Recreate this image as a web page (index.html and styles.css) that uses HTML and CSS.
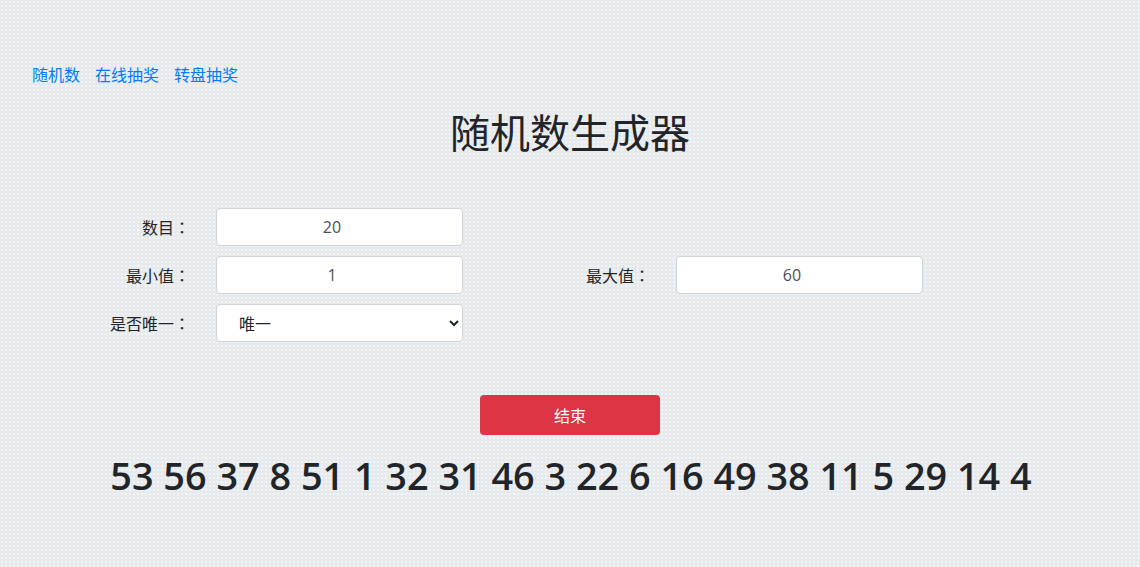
FILE: index.html
```html
<!DOCTYPE html>
<html lang="zh-CN">
<head>
<meta charset="utf-8">
<title>随机数生成器</title>
<link rel="stylesheet" href="styles.css">
</head>
<body>
<nav class="nav">
  <a href="#" class="nav-link">随机数</a>
  <a href="#" class="nav-link">在线抽奖</a>
  <a href="#" class="nav-link">转盘抽奖</a>
</nav>
<h1 class="title">随机数生成器</h1>
<form class="form">
  <div class="form-row">
    <label class="label">数目<span class="colon" lang="zh-Hant">：</span></label>
    <input class="field" type="number" value="20">
  </div>
  <div class="form-row">
    <label class="label">最小值<span class="colon" lang="zh-Hant">：</span></label>
    <input class="field" type="number" value="1">
    <label class="label label-second">最大值<span class="colon" lang="zh-Hant">：</span></label>
    <input class="field" type="number" value="60">
  </div>
  <div class="form-row">
    <label class="label">是否唯一<span class="colon" lang="zh-Hant">：</span></label>
    <select class="field select">
      <option>唯一</option>
      <option>不唯一</option>
    </select>
  </div>
</form>
<div class="actions">
  <button type="button" class="btn-stop">结束</button>
</div>
<div class="result">53 56 37 8 51 1 32 31 46 3 22 6 16 49 38 11 5 29 14 4</div>
</body>
</html>
```

FILE: styles.css
```css
html, body {
  margin: 0;
  padding: 0;
}
body {
  width: 1140px;
  height: 567px;
  overflow: hidden;
  background-color: #e7eaed;
  background-image: radial-gradient(circle, rgba(255,255,255,0.85) 0.55px, transparent 0.9px);
  background-size: 4px 4px;
  font-family: "Noto Sans CJK SC", "Noto Sans", sans-serif;
  color: #212529;
  font-size: 16px;
}
.nav {
  display: flex;
  gap: 15px;
  padding: 62px 0 0 32px;
  height: 24px;
  line-height: 24px;
}
.nav-link {
  color: #007bff;
  text-decoration: none;
  font-size: 16px;
}
.title {
  margin: 17px 0 0;
  text-align: center;
  font-size: 40px;
  font-weight: 400;
  line-height: 56px;
  height: 56px;
}
.form {
  margin-top: 49px;
  display: flex;
  flex-direction: column;
  gap: 10px;
}
.form-row {
  display: flex;
  align-items: center;
  height: 38px;
}
.label {
  width: 190px;
  text-align: right;
  margin-right: 26px;
  font-size: 16px;
  flex: none;
}
.colon {
  font-family: "Noto Sans CJK TC", sans-serif;
}
.label-second {
  width: 187px;
}
.field {
  box-sizing: border-box;
  width: 247px;
  height: 38px;
  border: 1px solid #ced4da;
  border-radius: 4px;
  background: #fff;
  font-family: "Open Sans", "Noto Sans CJK SC", sans-serif;
  font-size: 16px;
  color: #495057;
  text-align: center;
  padding: 0 12px;
  flex: none;
}
.select {
  text-align: left;
  padding-left: 18px;
  font-family: "Noto Sans CJK SC", sans-serif;
  color: #212529;
}
.actions {
  margin-top: 53px;
  display: flex;
  justify-content: center;
}
.btn-stop {
  width: 180px;
  height: 40px;
  background: #dc3545;
  color: #fff;
  border: none;
  border-radius: 4px;
  font-family: "Noto Sans CJK SC", sans-serif;
  font-size: 16px;
}
.result {
  margin-top: 16px;
  text-align: center;
  font-family: "Open Sans", sans-serif;
  font-weight: 600;
  font-size: 37.8px;
  line-height: 50px;
  padding-left: 2px;
}
```
